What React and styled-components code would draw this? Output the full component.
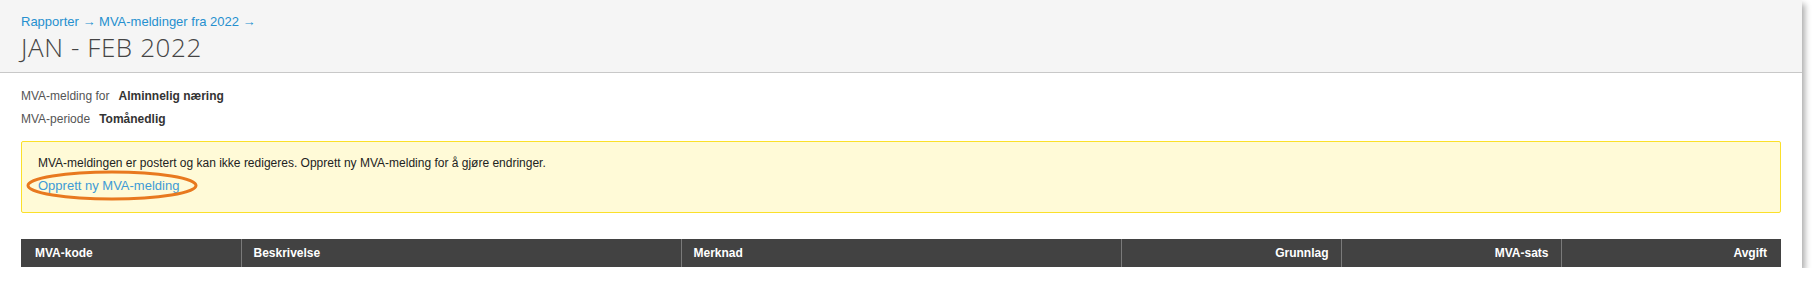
import React from "react";
import styled, { createGlobalStyle } from "styled-components";

const Global = createGlobalStyle`
  html, body { margin: 0; padding: 0; background: #fff; }
  body { font-family: "Liberation Sans", Arial, sans-serif; }
`;

const Card = styled.div`
  width: 1802px;
  height: 268px;
  overflow: hidden;
  background: #fff;
  box-shadow: 3px 4px 6px rgba(0, 0, 0, 0.32);
`;

const Header = styled.header`
  background: #f5f5f5;
  border-bottom: 1px solid #c8c8c8;
  padding: 14px 21px 10px;
`;

const Breadcrumb = styled.nav`
  font-size: 13px;
  line-height: 15px;
  color: #2690cf;
`;

const Crumb = styled.a`
  color: inherit;
  text-decoration: none;
`;

const Title = styled.h1`
  margin: 3px 0 0;
  font-family: "Open Sans", sans-serif;
  font-weight: 300;
  font-size: 26px;
  line-height: 30px;
  color: #444;
  letter-spacing: 0.6px;
`;

const Body = styled.div`
  padding: 15px 21px 0;
`;

const InfoRow = styled.div`
  display: flex;
  gap: 9px;
  font-size: 12px;
  line-height: 16px;
  margin-bottom: ${(p) => p.$mb || 0}px;
`;

const Label = styled.span`
  color: #555;
`;

const Value = styled.span`
  color: #333;
  font-weight: bold;
`;

const Alert = styled.div`
  margin-top: 14px;
  background: #fffad7;
  border: 1px solid #fbe02a;
  border-radius: 2px;
  padding: 13px 16px 18px;
`;

const AlertText = styled.p`
  margin: 0;
  font-size: 12px;
  line-height: 16px;
  color: #222;
`;

const LinkWrap = styled.div`
  position: relative;
  display: inline-block;
  margin-top: 6px;
`;

const Link = styled.a`
  font-size: 13px;
  line-height: 17px;
  color: #3e9bd6;
  text-decoration: none;
  display: block;
`;

const Circle = styled.svg`
  position: absolute;
  left: -12px;
  top: -7px;
  pointer-events: none;
`;

const Table = styled.table`
  margin-top: 26px;
  width: 100%;
  border-collapse: collapse;
  table-layout: fixed;
`;

const Th = styled.th`
  background: #424242;
  color: #fff;
  font-size: 12px;
  font-weight: bold;
  line-height: 14px;
  padding: 7px 12px;
  text-align: ${(p) => (p.$right ? "right" : "left")};
  border-left: 1px solid #7a7a7a;
  &:first-child {
    border-left: none;
    padding-left: 14px;
  }
  &:last-child {
    padding-right: 14px;
  }
`;

const columns = [
  { label: "MVA-kode", w: 220 },
  { label: "Beskrivelse", w: 440 },
  { label: "Merknad", w: 440 },
  { label: "Grunnlag", w: 220, right: true },
  { label: "MVA-sats", w: 220, right: true },
  { label: "Avgift", w: 220, right: true },
];

export default function App() {
  return (
    <>
      <Global />
      <Card>
        <Header>
          <Breadcrumb>
            <Crumb href="#">Rapporter</Crumb> → <Crumb href="#">MVA-meldinger fra 2022</Crumb> →
          </Breadcrumb>
          <Title>JAN - FEB 2022</Title>
        </Header>
        <Body>
          <InfoRow $mb={7}>
            <Label>MVA-melding for</Label>
            <Value>Alminnelig næring</Value>
          </InfoRow>
          <InfoRow>
            <Label>MVA-periode</Label>
            <Value>Tomånedlig</Value>
          </InfoRow>
          <Alert>
            <AlertText>
              MVA-meldingen er postert og kan ikke redigeres. Opprett ny MVA-melding for å gjøre endringer.
            </AlertText>
            <LinkWrap>
              <Link href="#">Opprett ny MVA-melding</Link>
              <Circle width="173" height="31" viewBox="0 0 173 31">
                <ellipse cx="86" cy="15.5" rx="84" ry="13.5" fill="none" stroke="#e8791f" strokeWidth="3" />
              </Circle>
            </LinkWrap>
          </Alert>
          <Table>
            <colgroup>
              {columns.map((c) => (
                <col key={c.label} style={{ width: c.w }} />
              ))}
            </colgroup>
            <thead>
              <tr>
                {columns.map((c) => (
                  <Th key={c.label} $right={c.right}>
                    {c.label}
                  </Th>
                ))}
              </tr>
            </thead>
          </Table>
        </Body>
      </Card>
    </>
  );
}
